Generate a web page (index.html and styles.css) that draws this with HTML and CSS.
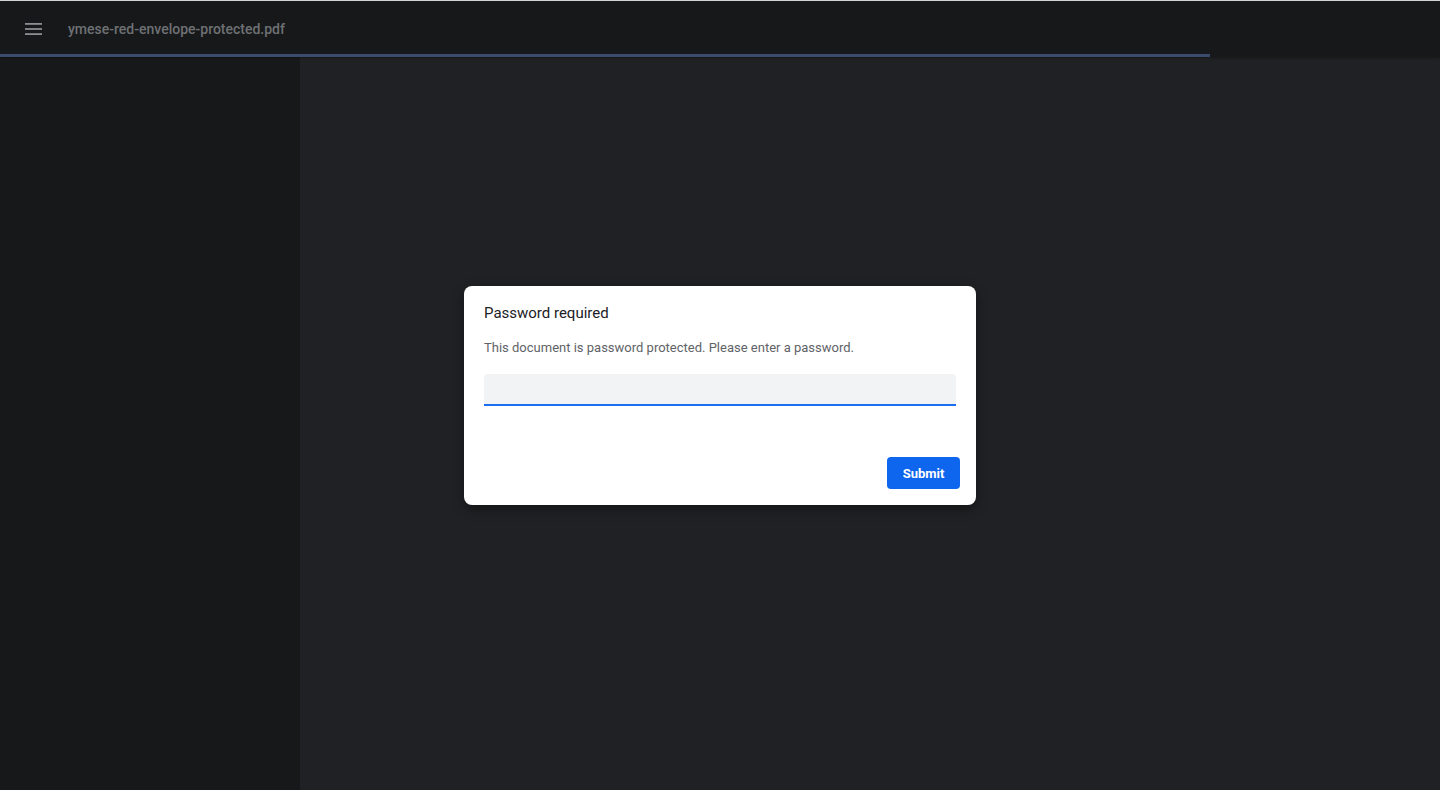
FILE: index.html
```html
<!DOCTYPE html>
<html>
<head>
<meta charset="utf-8">
<link rel="stylesheet" href="styles.css">
</head>
<body>
<div class="app">
  <header class="toolbar">
    <div class="toolbar-row">
      <button class="menu-btn" aria-label="Menu">
        <svg width="18" height="14" viewBox="0 0 18 14"><rect x="0" y="1" width="17" height="1.8" fill="#8a8d91"/><rect x="0" y="6.1" width="17" height="1.8" fill="#8a8d91"/><rect x="0" y="11.2" width="17" height="1.8" fill="#8a8d91"/></svg>
      </button>
      <span class="title">ymese-red-envelope-protected.pdf</span>
    </div>
    <div class="progress"><div class="progress-fill"></div></div>
  </header>
  <div class="body">
    <aside class="sidebar"></aside>
    <main class="viewer">
      <div class="dialog">
        <div class="dialog-title">Password required</div>
        <div class="dialog-text">This document is password protected. Please enter a password.</div>
        <div class="field"></div>
        <div class="actions"><button class="submit">Submit</button></div>
      </div>
    </main>
  </div>
</div>
</body>
</html>
```

FILE: styles.css
```css
* { box-sizing: border-box; }
html, body { margin: 0; padding: 0; height: 100%; }
body { background: #202124; font-family: Roboto, "Liberation Sans", sans-serif; overflow: hidden; }
.app { display: flex; flex-direction: column; height: 790px; border-top: 1px solid #d9d9d9; }
.toolbar { background: #17181a; height: 56px; display: flex; flex-direction: column; box-shadow: 0 1px 2px rgba(0,0,0,0.3); position: relative; z-index: 1; }
.toolbar-row { flex: 1; display: flex; align-items: center; padding-left: 25px; }
.menu-btn { background: none; border: 0; padding: 0; width: 18px; height: 14px; display: flex; margin-top: 3px; }
.title { margin-left: 25px; color: #6e7174; font-size: 14px; font-weight: 500; margin-top: 3px; letter-spacing: 0; }
.progress { height: 3px; }
.progress-fill { width: 1210px; height: 3px; background: #3b4b6e; }
.body { flex: 1; display: flex; }
.sidebar { width: 300px; background: #17181a; }
.viewer { flex: 1; background: #202124; display: flex; justify-content: center; padding-top: 229px; padding-right: 300px; }
.dialog { width: 512px; height: 219px; background: #fff; border-radius: 8px; padding: 17px 20px 16px; box-shadow: 0 4px 12px rgba(0,0,0,0.4); display: flex; flex-direction: column; }
.dialog-title { font-size: 15px; color: #202124; line-height: 20px; }
.dialog-text { margin-top: 16px; font-size: 13px; color: #5f6368; line-height: 18px; }
.field { margin-top: 17px; height: 32px; background: #f1f3f4; border-radius: 4px 4px 0 0; border-bottom: 2px solid #1a6ef0; }
.actions { margin-top: auto; display: flex; justify-content: flex-end; margin-right: -4px; }
.submit { width: 73px; height: 32px; background: #0f66ee; color: #fff; border: 0; border-radius: 4px; font-family: Roboto, "Liberation Sans", sans-serif; font-size: 13px; font-weight: 700; }
```
